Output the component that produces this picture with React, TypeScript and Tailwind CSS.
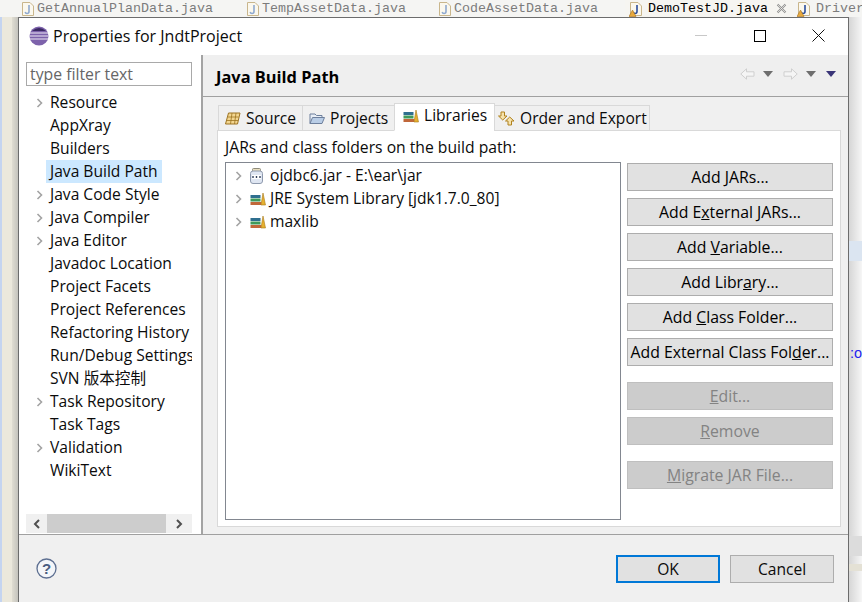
import type { ReactNode } from 'react';

const uiFont = "font-['Open_Sans','Noto_Sans_CJK_SC',sans-serif]";

const treeItems = [
  { label: 'Resource', arrow: true },
  { label: 'AppXray' },
  { label: 'Builders' },
  { label: 'Java Build Path', selected: true },
  { label: 'Java Code Style', arrow: true },
  { label: 'Java Compiler', arrow: true },
  { label: 'Java Editor', arrow: true },
  { label: 'Javadoc Location' },
  { label: 'Project Facets' },
  { label: 'Project References' },
  { label: 'Refactoring History' },
  { label: 'Run/Debug Settings' },
  { label: 'SVN 版本控制' },
  { label: 'Task Repository', arrow: true },
  { label: 'Task Tags' },
  { label: 'Validation', arrow: true },
  { label: 'WikiText' },
];

function Chevron() {
  return (
    <svg width="7" height="10" viewBox="0 0 7 10" className="shrink-0">
      <path d="M1.5 1 L5.5 5 L1.5 9" fill="none" stroke="#a3a3a3" strokeWidth="1.6" />
    </svg>
  );
}

function JavaFileIcon({ warn }: { warn?: boolean }) {
  return (
    <svg width="14" height="16" viewBox="0 0 14 16" className="shrink-0">
      <path d="M1.5 1.5 H9 L12.5 5 V14.5 H1.5 Z" fill="#fbf8ee" stroke="#c9b68c" />
      <path d="M8 4 V10.5 Q8 12.5 6 12.5 Q4.5 12.5 4.2 11" fill="none" stroke={warn ? '#2a4d9c' : '#8fa9cf'} strokeWidth="1.6" />
      {warn && <path d="M3.5 9 L7 15.5 H0 Z" fill="#e8a93c" stroke="#a8701c" strokeWidth="0.6" />}
    </svg>
  );
}

function BooksIcon() {
  return (
    <svg width="16" height="14" viewBox="0 0 16 14" className="shrink-0">
      <rect x="0.5" y="3" width="10" height="3" fill="#2f6f8f" />
      <rect x="0.5" y="6.5" width="10" height="3" fill="#3f9a5a" />
      <rect x="0.5" y="10" width="11" height="3" fill="#c0673a" />
      <path d="M11 13 L13 1 L15.5 13 Z" fill="#e6b02f" stroke="#a8781a" strokeWidth="0.6" />
    </svg>
  );
}

function JarIcon() {
  return (
    <svg width="13" height="16" viewBox="0 0 13 16" className="shrink-0">
      <rect x="2.5" y="0.5" width="8" height="3" rx="1" fill="#e9dfc0" stroke="#8d8a7a" />
      <rect x="0.5" y="3" width="12" height="12.5" rx="2.5" fill="#dfe6f2" stroke="#8e99ad" />
      <rect x="2" y="7" width="9" height="4" fill="#ffffff" />
      <path d="M3 8 V10 M6.5 8 V10 M10 8 V10" stroke="#33425e" strokeWidth="1.4" />
    </svg>
  );
}

function EclipseLogo() {
  return (
    <svg width="20" height="20" viewBox="0 0 20 20" className="shrink-0">
      <circle cx="10" cy="10" r="9.5" fill="#7d62ab" />
      <path d="M1 7 H19 M0.5 10 H19.5 M1 13 H19" stroke="#efe9f7" strokeWidth="1.1" />
      <path d="M3 5 Q10 -1 17 5 Z" fill="#3b2a63" />
    </svg>
  );
}

function SourceIcon() {
  return (
    <svg width="16" height="13" viewBox="0 0 16 13" className="shrink-0">
      <path d="M3.5 1 H15 L12.5 12 H0.5 Z" fill="#f3d690" stroke="#9c7322" />
      <path d="M3 5 H13.5 M2 8.5 H13 M7 1 L5.5 12 M11 1 L9.5 12" stroke="#9c7322" strokeWidth="0.8" />
    </svg>
  );
}

function FolderIcon() {
  return (
    <svg width="16" height="13" viewBox="0 0 16 13" className="shrink-0">
      <path d="M1 11.5 V2 H6 L7.5 3.5 H13 V5.5" fill="#e8eef6" stroke="#6d7f9c" />
      <path d="M1 11.5 L3.5 5.5 H15.5 L13 11.5 Z" fill="#b9cde6" stroke="#6d7f9c" />
    </svg>
  );
}

function OrderIcon() {
  return (
    <svg width="17" height="15" viewBox="0 0 17 15" className="shrink-0">
      <path d="M3 1 H6.5 V5 H9 L4.75 9 L0.5 5 H3 Z" fill="#f6e3ae" stroke="#b0821f" />
      <path d="M10 14 H13.5 V10 H16 L11.75 6 L7.5 10 H10 Z" fill="#f6e3ae" stroke="#b0821f" />
    </svg>
  );
}

function NavArrow({ flip }: { flip?: boolean }) {
  return (
    <svg width="15" height="12" viewBox="0 0 15 12" className={flip ? 'shrink-0 -scale-x-100' : 'shrink-0'}>
      <path d="M6.5 0.8 L0.8 6 L6.5 11.2 V8.2 H14 V3.8 H6.5 Z" fill="#f5f5f5" stroke="#cfcfcf" />
    </svg>
  );
}

function Caret({ color }: { color: string }) {
  return (
    <svg width="10" height="6" viewBox="0 0 10 6" className="shrink-0">
      <path d="M0 0 H10 L5 6 Z" fill={color} />
    </svg>
  );
}

function EditorTab({ name, warn, width, active }: { name: string; warn?: boolean; width: string; active?: boolean }) {
  return (
    <div className={`${width} ${active ? 'bg-[#f6f5f1] text-black' : 'text-[#7c7c7c]'} flex h-[17px] shrink-0 items-center overflow-hidden font-['Liberation_Mono',monospace] text-[13.33px]`}>
      <JavaFileIcon warn={warn} />
      <span className={`${warn ? 'ml-[5px]' : 'ml-[2px]'} whitespace-nowrap`}>{name}</span>
      {active && (
        <svg width="11" height="11" viewBox="0 0 11 11" className="ml-[8px] shrink-0">
          <path d="M1.5 1.5 L9.5 9.5 M9.5 1.5 L1.5 9.5" stroke="#8e8e8e" strokeWidth="2" />
          <path d="M1.5 1.5 L9.5 9.5 M9.5 1.5 L1.5 9.5" stroke="#f6f5f1" strokeWidth="0.7" />
        </svg>
      )}
    </div>
  );
}

function ActionButton({ children, disabled, className }: { children: ReactNode; disabled?: boolean; className?: string }) {
  return (
    <div
      className={`${disabled ? 'bg-[#cccccc] border-[#bfbfbf] text-[#838383]' : 'bg-[#e1e1e1] border-[#adadad] text-black'} ${className ?? ''} flex h-[28px] w-[206px] shrink-0 items-center justify-center border pt-px text-[15.8px] whitespace-nowrap`}
    >
      <span>{children}</span>
    </div>
  );
}

function FolderTab({ icon, label, width, active }: { icon: ReactNode; label: string; width: string; active?: boolean }) {
  return (
    <div
      className={`${width} ${active ? 'h-[28px] border-b-white bg-white pb-[3px]' : 'h-[26px] bg-[#f0f0f0]'} z-10 -mr-px -mb-px flex items-center gap-[5px] border border-[#d9d9d9]`}
    >
      {icon}
      <span className="pt-px whitespace-nowrap">{label}</span>
    </div>
  );
}

function LibraryRow({ icon, label }: { icon: ReactNode; label: string }) {
  return (
    <div className="flex h-[23px] items-center pl-[9px]">
      <Chevron />
      <div className="ml-[8px] flex w-[20px] shrink-0 items-center">{icon}</div>
      <span className="whitespace-nowrap">{label}</span>
    </div>
  );
}

export default function App() {
  return (
    <div className={`${uiFont} flex h-[602px] w-[862px] flex-col overflow-hidden bg-[#f5f5f3] text-[15.6px] leading-none text-[#0b0b0b]`}>
      {/* editor tabs behind the dialog */}
      <div className="flex h-[17px] shrink-0 bg-[#f5f5f3] pl-[21px]">
        <EditorTab name="GetAnnualPlanData.java" width="w-[225px]" />
        <EditorTab name="TempAssetData.java" width="w-[192px]" />
        <EditorTab name="CodeAssetData.java" width="w-[187px]" />
        <EditorTab name="DemoTestJD.java" width="w-[168px] pl-[4px]" warn active />
        <EditorTab name="Driver" width="w-[69px] pl-[4px]" warn />
      </div>

      <div className="flex min-h-0 flex-1">
        {/* left editor margin */}
        <div className="flex w-[18px] shrink-0">
          <div className="w-[2px] bg-[#c4d4f0]" />
          <div className="w-[10px] bg-[#ebe8dc]" />
          <div className="w-[6px] bg-gradient-to-r from-[#e0ddd2] to-[#c4c3bd]" />
        </div>

        {/* dialog */}
        <div className="flex w-[831px] shrink-0 flex-col border border-b-0 border-[#6c6c6c] bg-white">
          <div className="flex h-[37px] shrink-0 items-center pb-[2px] pl-[10px]">
            <EclipseLogo />
            <span className="ml-[4px] text-[16px]">Properties for JndtProject</span>
            <div className="ml-auto flex items-center pr-[23px]">
              <div className="h-px w-[12px] bg-[#c8c8c8]" />
              <div className="ml-[47px] h-[12px] w-[12px] border border-black" />
              <svg width="13" height="13" viewBox="0 0 13 13" className="ml-[46px]">
                <path d="M0.5 0.5 L12.5 12.5 M12.5 0.5 L0.5 12.5" stroke="#111" strokeWidth="1" />
              </svg>
            </div>
          </div>

          <div className="flex h-[479px] shrink-0">
            {/* preference tree */}
            <div className="flex w-[184px] shrink-0 flex-col border-r-2 border-[#a3a3a3] pl-[7px]">
              <div className="mt-[7px] flex h-[24px] w-[166px] shrink-0 items-center border border-[#a9a9a9] pt-px pl-[3px] text-[15.8px] text-[#666666]">
                type filter text
              </div>
              <div className="mt-[5px] w-[166px] overflow-hidden">
                {treeItems.map((item) => (
                  <div key={item.label} className="flex h-[23px] items-center">
                    <div className="flex w-[20px] shrink-0 items-center justify-center pr-[2px] pl-[8px]">{item.arrow && <Chevron />}</div>
                    <div className={`${item.selected ? 'bg-[#cce8ff]' : ''} flex h-[23px] items-center px-[4px] whitespace-nowrap`}>{item.label}</div>
                  </div>
                ))}
              </div>
              <div className="mt-auto mb-px flex h-[19px] w-[166px] items-center bg-[#f0f0f0]">
                <div className="flex w-[21px] justify-center">
                  <svg width="8" height="10" viewBox="0 0 8 10">
                    <path d="M6 1 L2 5 L6 9" fill="none" stroke="#505050" strokeWidth="2" />
                  </svg>
                </div>
                <div className="h-full w-[119px] bg-[#cdcdcd]" />
                <div className="flex flex-1 justify-center">
                  <svg width="8" height="10" viewBox="0 0 8 10">
                    <path d="M2 1 L6 5 L2 9" fill="none" stroke="#505050" strokeWidth="2" />
                  </svg>
                </div>
              </div>
            </div>

            {/* page */}
            <div className="flex min-w-0 flex-1 flex-col bg-[#f0f0f0]">
              <div className="flex h-[42px] shrink-0 items-center border-b border-[#a0a0a0] bg-[#efefef] pl-[13px]">
                <span className="pt-[3px] text-[16.4px] font-bold text-black">Java Build Path</span>
                <div className="ml-auto flex items-center pr-[12px] pb-[3px]">
                  <NavArrow />
                  <div className="ml-[8px] flex"><Caret color="#6e6e6e" /></div>
                  <div className="ml-[10px] flex"><NavArrow flip /></div>
                  <div className="ml-[8px] flex"><Caret color="#6e6e6e" /></div>
                  <div className="ml-[10px] flex"><Caret color="#3a3578" /></div>
                </div>
              </div>

              <div className="flex min-h-0 flex-1 flex-col pt-[6px] pr-[7px] pb-[7px] pl-[14px]">
                <div className="flex h-[27px] shrink-0 items-end pl-[1px]">
                  <FolderTab icon={<SourceIcon />} label="Source" width="w-[85px] pl-[6px]" />
                  <FolderTab icon={<FolderIcon />} label="Projects" width="w-[93px] pl-[6px]" />
                  <FolderTab icon={<BooksIcon />} label="Libraries" width="w-[101px] pl-[8px]" active />
                  <FolderTab icon={<OrderIcon />} label="Order and Export" width="w-[156px] pl-[3px]" />
                </div>
                <div className="flex min-h-0 flex-1 flex-col border border-[#d9d9d9] bg-white pt-[7px] pr-[7px] pb-[6px] pl-[7px]">
                  <div className="flex h-[18px] shrink-0 items-center pt-px text-[15.7px]">JARs and class folders on the build path:</div>
                  <div className="mt-[6px] flex min-h-0 flex-1 gap-[6px]">
                    <div className="w-[396px] shrink-0 border border-[#828790] pt-[1px]">
                      <LibraryRow icon={<JarIcon />} label="ojdbc6.jar - E:\ear\jar" />
                      <LibraryRow icon={<BooksIcon />} label="JRE System Library [jdk1.7.0_80]" />
                      <LibraryRow icon={<BooksIcon />} label="maxlib" />
                    </div>
                    <div className="flex flex-col pt-[1px]">
                      <div className="flex flex-col gap-[7px]">
                        <ActionButton>Add <u>J</u>ARs...</ActionButton>
                        <ActionButton>Add E<u>x</u>ternal JARs...</ActionButton>
                        <ActionButton>Add <u>V</u>ariable...</ActionButton>
                        <ActionButton>Add Libr<u>a</u>ry...</ActionButton>
                        <ActionButton>Add <u>C</u>lass Folder...</ActionButton>
                        <ActionButton>Add External Class Fol<u>d</u>er...</ActionButton>
                      </div>
                      <ActionButton disabled className="mt-[16px]"><u>E</u>dit...</ActionButton>
                      <ActionButton disabled className="mt-[7px]"><u>R</u>emove</ActionButton>
                      <ActionButton disabled className="mt-[16px]"><u>M</u>igrate JAR File...</ActionButton>
                    </div>
                  </div>
                </div>
              </div>
            </div>
          </div>

          {/* footer */}
          <div className="flex min-h-0 flex-1 items-start border-t border-[#a0a0a0] bg-[#f0f0f0] pt-[20px] pl-[17px]">
            <svg width="21" height="21" viewBox="0 0 21 21" className="mt-[3px] shrink-0">
              <circle cx="10.5" cy="10.5" r="9.5" fill="#f4f6f9" stroke="#5d6f91" strokeWidth="1.3" />
              <text x="10.5" y="16" textAnchor="middle" fontSize="15" fontWeight="700" fill="#4a5d80" fontFamily="Liberation Sans, sans-serif">?</text>
            </svg>
            <div className="ml-auto flex gap-[10px] pr-[14px]">
              <div className="flex h-[28px] w-[104px] items-center justify-center border-2 border-[#0078d7] bg-[#e1e1e1] pt-px">OK</div>
              <div className="flex h-[28px] w-[104px] items-center justify-center border border-[#adadad] bg-[#e1e1e1] pt-px">Cancel</div>
            </div>
          </div>
        </div>

        {/* right editor margin */}
        <div className="flex min-w-0 flex-1 flex-col bg-gradient-to-r from-[#d6d6d6] to-[#f6f6f6]">
          <div className="mt-[224px] h-[20px] shrink-0 bg-[#dbe5f1]" />
          <div className="mt-[82px] h-[20px] shrink-0 pl-[1px] font-['Liberation_Sans',sans-serif] text-[14.5px] leading-[20px] text-[#2222ee]">:o</div>
          <div className="mt-[173px] h-[20px] shrink-0 bg-[#dcdcdc]" />
          <div className="mt-[8px] h-[7px] shrink-0 bg-[#e4e1d5]" />
        </div>
      </div>
    </div>
  );
}
